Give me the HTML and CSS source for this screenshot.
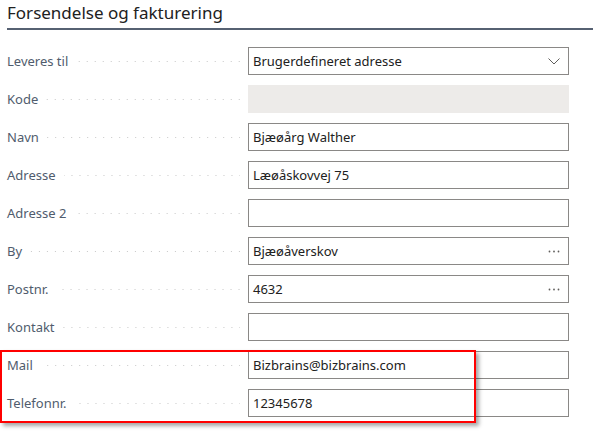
FILE: index.html
```html
<!DOCTYPE html>
<html lang="da">
<head>
    <meta charset="UTF-8">
    <meta name="viewport" content="width=device-width, initial-scale=1.0">
    <title>Forsendelse og fakturering</title>
    <link rel="stylesheet" href="styles.css">
</head>
<body>

<div class="section">
    <h2 class="section-title">Forsendelse og fakturering</h2>

    <div class="rows">
        <div class="row">
            <div class="label"><span>Leveres til</span><i class="leader"></i></div>
            <div class="field">
                <span class="value">Brugerdefineret adresse</span>
                <svg class="icon" width="12" height="7" viewBox="0 0 12 7"><polyline points="0.5,0.5 6,6 11.5,0.5" fill="none" stroke="#605e5c" stroke-width="1"/></svg>
            </div>
        </div>
        <div class="row">
            <div class="label"><span>Kode</span><i class="leader"></i></div>
            <div class="field disabled"></div>
        </div>
        <div class="row">
            <div class="label"><span>Navn</span><i class="leader"></i></div>
            <div class="field"><span class="value">Bjæøårg Walther</span></div>
        </div>
        <div class="row">
            <div class="label"><span>Adresse</span><i class="leader"></i></div>
            <div class="field"><span class="value">Læøåskovvej 75</span></div>
        </div>
        <div class="row">
            <div class="label"><span>Adresse 2</span><i class="leader"></i></div>
            <div class="field"></div>
        </div>
        <div class="row">
            <div class="label"><span>By</span><i class="leader"></i></div>
            <div class="field">
                <span class="value">Bjæøåverskov</span>
                <svg class="icon" width="12" height="3" viewBox="0 0 12 3"><circle cx="1.5" cy="1.5" r="0.9" fill="#605e5c"/><circle cx="6" cy="1.5" r="0.9" fill="#605e5c"/><circle cx="10.5" cy="1.5" r="0.9" fill="#605e5c"/></svg>
            </div>
        </div>
        <div class="row">
            <div class="label"><span>Postnr.</span><i class="leader"></i></div>
            <div class="field">
                <span class="value">4632</span>
                <svg class="icon" width="12" height="3" viewBox="0 0 12 3"><circle cx="1.5" cy="1.5" r="0.9" fill="#605e5c"/><circle cx="6" cy="1.5" r="0.9" fill="#605e5c"/><circle cx="10.5" cy="1.5" r="0.9" fill="#605e5c"/></svg>
            </div>
        </div>
        <div class="row">
            <div class="label"><span>Kontakt</span><i class="leader"></i></div>
            <div class="field"></div>
        </div>

        <!-- highlighted contact fields -->
        <div class="group">
            <div class="row">
                <div class="label"><span>Mail</span><i class="leader"></i></div>
                <div class="field"><span class="value">Bizbrains@bizbrains.com</span></div>
            </div>
            <div class="row">
                <div class="label"><span>Telefonnr.</span><i class="leader"></i></div>
                <div class="field"><span class="value">12345678</span></div>
            </div>
            <div class="highlight"></div>
        </div>
    </div>
</div>

</body>
</html>
```

FILE: styles.css
```css
body { margin: 0; background: #fff; font-family: "Noto Sans", "Open Sans", sans-serif; color: #212121; }
.section { padding: 0 0 16px 7px; }
.section-title { margin: 0; padding: 3px 0 5px; font-size: 17px; font-weight: 400; line-height: 20px; border-bottom: 2px solid #566172; }
.rows { display: flex; flex-direction: column; gap: 10px; padding-top: 17px; }
.row { display: flex; align-items: center; height: 28px; }
.label { display: flex; align-items: center; width: 233px; margin-right: 8px; font-size: 13px; color: #505c6d; white-space: nowrap; }
.leader { flex: 1; height: 1px; margin-left: 8px; background: linear-gradient(to right, transparent 7px, #c8c8c8 7px) right center / 8px 1px repeat-x; }
.field { display: flex; align-items: center; justify-content: space-between; box-sizing: border-box; width: 321px; height: 28px; padding: 0 8px 0 4px; border: 1px solid #8a8886; font-size: 13px; }
.field.disabled { border-color: #edebe9; background: #edebe9; }
.icon { display: block; }
.group { position: relative; display: flex; flex-direction: column; gap: 10px; }
.highlight { position: absolute; left: -7px; top: -1px; width: 476px; height: 73px; box-sizing: border-box; border: 2px solid #f00; box-shadow: 3px 3px 4px rgba(0,0,0,0.35); }
```
